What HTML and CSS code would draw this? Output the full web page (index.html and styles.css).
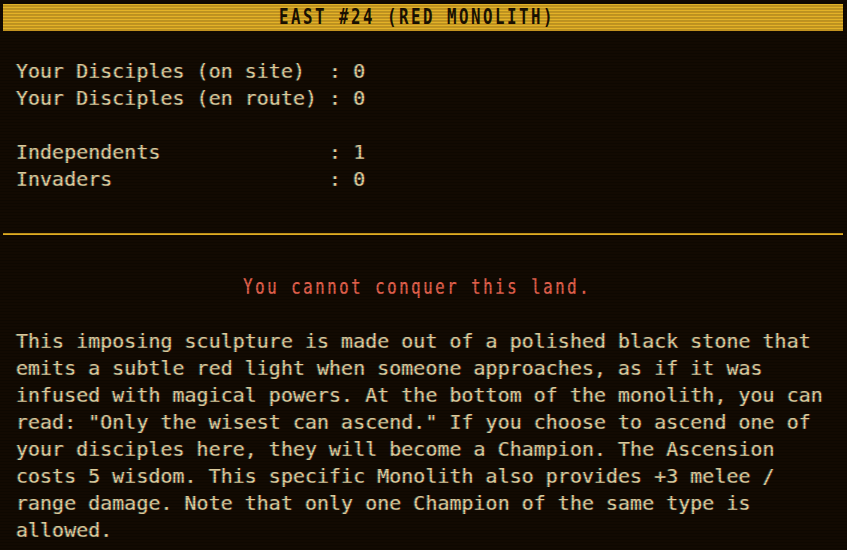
FILE: index.html
```html
<!DOCTYPE html>
<html lang="en">
<head>
<meta charset="utf-8">
<title>East #24 (Red Monolith)</title>
<link rel="stylesheet" href="styles.css">
</head>
<body>
<div class="screen">
  <div class="titlebar"><span class="narrow title">EAST #24 (RED MONOLITH)&nbsp;</span></div>
  <div class="stats">
    <div class="row">Your Disciples (on site)  : 0</div>
    <div class="row">Your Disciples (en route) : 0</div>
    <div class="row"> </div>
    <div class="row">Independents              : 1</div>
    <div class="row">Invaders                  : 0</div>
  </div>
  <div class="rule"></div>
  <p class="warning"><span class="narrow">You cannot conquer this land.&nbsp;</span></p>
  <p class="desc">This imposing sculpture is made out of a polished black stone that emits a subtle red light when someone approaches, as if it was infused with magical powers. At the bottom of the monolith, you can read: "Only the wisest can ascend." If you choose to ascend one of your disciples here, they will become a Champion. The Ascension costs 5 wisdom. This specific Monolith also provides +3 melee / range damage. Note that only one Champion of the same type is allowed.</p>
</div>
<div class="scanlines"></div>
</body>
</html>
```

FILE: styles.css
```css
html, body {
  margin: 0;
  padding: 0;
  background: #120a02;
  height: 100%;
  overflow: hidden;
}

.screen {
  padding: 4px 4px 0 3px;
  font-family: "DejaVu Sans Mono", "Liberation Mono", monospace;
  font-size: 20px;
  line-height: 27px;
  color: #dccb9c;
  text-shadow: -1px 0 rgba(80, 200, 220, 0.35), 1px 0 rgba(220, 60, 40, 0.3);
}

.titlebar {
  height: 27px;
  background:
    repeating-linear-gradient(to bottom, #e3b228 0, #e3b228 2px, #c2921f 2px, #c2921f 3px);
  text-align: center;
  overflow: hidden;
}

.narrow {
  display: inline-block;
  font-size: 21px;
  letter-spacing: 3.36px;
  transform: scaleX(0.75);
  transform-origin: center;
  line-height: 27px;
  white-space: pre;
}

.title {
  color: #1a1102;
  font-weight: bold;
  text-shadow: none;
}

.stats {
  margin-top: 27px;
  padding: 0 13px;
}

.row {
  white-space: pre;
  height: 27px;
}

.rule {
  margin: 40px 0 0;
  height: 2px;
  background: #e0ac22;
}

.warning {
  margin: 39px 0 0;
  padding: 0 13px;
  text-align: center;
  color: #e0604c;
  text-shadow: 0.5px 0 rgba(224, 96, 76, 0.6);
}

.desc {
  margin: 27px 0 0;
  padding: 0 13px;
}

.scanlines {
  position: fixed;
  inset: 0;
  pointer-events: none;
  background: repeating-linear-gradient(to bottom, rgba(0, 0, 0, 0) 0, rgba(0, 0, 0, 0) 2px, rgba(0, 0, 0, 0.18) 2px, rgba(0, 0, 0, 0.18) 3px);
}
```
